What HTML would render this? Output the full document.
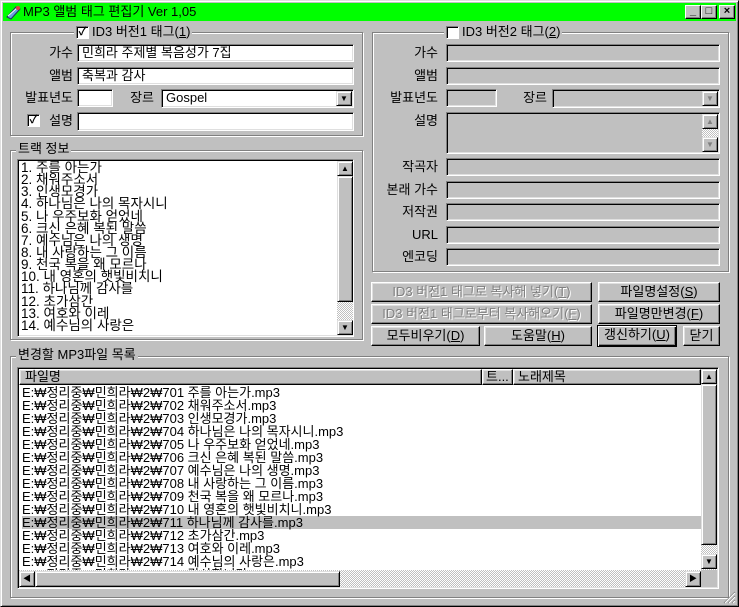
<!DOCTYPE html>
<html><head><meta charset="utf-8"><style>
*{margin:0;padding:0;box-sizing:border-box}
body{width:739px;height:607px;background:#c0c0c0;font-family:"Liberation Sans","Noto Sans CJK KR",sans-serif;font-size:13px;color:#000;position:relative;overflow:hidden}
.a{position:absolute}
.win{left:0;top:0;width:739px;height:607px;border:1px solid;border-color:#dfdfdf #000 #000 #dfdfdf;box-shadow:inset 1px 1px #fff,inset -1px -1px #808080}
.title{left:3px;top:3px;width:733px;height:18px;background:#00ff00;font-size:13px;line-height:18px;padding-left:20px}
.tb{top:5px;width:16px;height:14px;background:#c0c0c0;border:1px solid;border-color:#fff #000 #000 #fff;box-shadow:inset -1px -1px #808080;font-size:11px;font-weight:bold;text-align:center;line-height:11px}
.grp{border:1px solid #808080;box-shadow:inset 1px 1px #fff,1px 1px #fff}
.gt{background:#c0c0c0;padding:0 2px;line-height:14px;white-space:nowrap}
.sunk{border:1px solid;border-color:#808080 #fff #fff #808080;box-shadow:inset 1px 1px #000,inset -1px -1px #dfdfdf;background:#fff;line-height:15px;padding-left:4px;white-space:nowrap}
.dis{background:#c0c0c0}
.lbl{text-align:right;line-height:17px;white-space:nowrap}
.btn{background:#c0c0c0;border:1px solid;border-color:#fff #000 #000 #fff;box-shadow:inset -1px -1px #808080,inset 1px 1px #dfdfdf;text-align:center;line-height:17px;white-space:nowrap}
.btn.g{color:#808080;text-shadow:1px 1px #fff}
.cb{width:13px;height:13px;background:#fff;border:1px solid;border-color:#808080 #fff #fff #808080;box-shadow:inset 1px 1px #000;font-size:11px;line-height:11px;text-align:center;font-weight:bold}
.sb{width:16px;height:15px;background:#c0c0c0;border:1px solid;border-color:#dfdfdf #000 #000 #dfdfdf;box-shadow:inset 1px 1px #fff,inset -1px -1px #808080;font-size:8px;text-align:center;line-height:13px}
.dith{background:repeating-conic-gradient(#fff 0 25%,#c0c0c0 0 50%) 0 0/2px 2px}
.th{background:#c0c0c0;border:1px solid;border-color:#dfdfdf #000 #000 #dfdfdf;box-shadow:inset 1px 1px #fff,inset -1px -1px #808080}
.trk div{height:12.15px;line-height:12px;font-size:13.5px;white-space:nowrap}
.fl div{height:13px;line-height:13px;font-size:13px;white-space:nowrap;padding-left:3px}
</style></head><body>
<div class="a win"></div>
<div class="a title">MP3 앨범 태그 편집기 Ver 1,05</div>
<svg class="a" style="left:5px;top:4px" width="17" height="16"><path d="M2 13 L11 3 L15 5 L6 15 Z" fill="#6aa0e0" stroke="#203060"/><path d="M3 12 L12 4" stroke="#fff"/><circle cx="13" cy="4" r="2" fill="#e04040"/></svg>
<div class="a tb" style="left:685px">_</div>
<div class="a tb" style="left:701px">□</div>
<div class="a tb" style="left:719px">×</div>

<!-- ID3 v1 -->
<div class="a grp" style="left:10px;top:32px;width:353px;height:104px"></div>
<div class="a gt" style="left:74px;top:25px;padding-left:18px">ID3 버전1 태그(<u>1</u>)</div>
<div class="a cb" style="left:76px;top:26px">✓</div>
<div class="a lbl" style="left:20px;top:44px;width:53px">가수</div>
<div class="a sunk" style="left:77px;top:44px;width:277px;height:18px">민희라 주제별 복음성가 7집</div>
<div class="a lbl" style="left:20px;top:67px;width:53px">앨범</div>
<div class="a sunk" style="left:77px;top:67px;width:277px;height:18px">축복과 감사</div>
<div class="a lbl" style="left:12px;top:89px;width:61px">발표년도</div>
<div class="a sunk" style="left:77px;top:89px;width:36px;height:18px"></div>
<div class="a lbl" style="left:122px;top:89px;width:32px">장르</div>
<div class="a sunk" style="left:161px;top:89px;width:193px;height:19px">Gospel</div>
<div class="a sb" style="left:336px;top:91px">▼</div>
<div class="a cb" style="left:27px;top:114px">✓</div>
<div class="a lbl" style="left:40px;top:112px;width:33px">설명</div>
<div class="a sunk" style="left:77px;top:112px;width:277px;height:19px"></div>

<!-- Track -->
<div class="a grp" style="left:10px;top:150px;width:353px;height:190px"></div>
<div class="a gt" style="left:16px;top:142px">트랙 정보</div>
<div class="a sunk trk" style="left:17px;top:159px;width:337px;height:178px;padding:2px 0 0 3px">
<div>1. 주를 아는가</div><div>2. 채워주소서</div><div>3. 인생모경가</div><div>4. 하나님은 나의 목자시니</div><div>5. 나 우주보화 얻었네</div><div>6. 크신 은혜 복된 말씀</div><div>7. 예수님은 나의 생명</div><div>8. 내 사랑하는 그 이름</div><div>9. 천국 복을 왜 모르나</div><div>10. 내 영혼의 햇빛비치니</div><div>11. 하나님께 감사를</div><div>12. 초가삼간</div><div>13. 여호와 이레</div><div>14. 예수님의 사랑은</div></div>
<div class="a dith" style="left:337px;top:161px;width:16px;height:174px"></div>
<div class="a sb" style="left:337px;top:161px">▲</div>
<div class="a th" style="left:337px;top:176px;width:16px;height:126px"></div>
<div class="a sb" style="left:337px;top:320px">▼</div>

<!-- ID3 v2 -->
<div class="a grp" style="left:372px;top:32px;width:357px;height:240px"></div>
<div class="a gt" style="left:444px;top:25px;padding-left:18px">ID3 버전2 태그(<u>2</u>)</div>
<div class="a cb" style="left:446px;top:26px"></div>
<div class="a lbl" style="left:375px;top:44px;width:63px">가수</div>
<div class="a sunk dis" style="left:446px;top:44px;width:274px;height:18px"></div>
<div class="a lbl" style="left:375px;top:67px;width:63px">앨범</div>
<div class="a sunk dis" style="left:446px;top:67px;width:274px;height:18px"></div>
<div class="a lbl" style="left:375px;top:89px;width:63px">발표년도</div>
<div class="a sunk dis" style="left:446px;top:89px;width:51px;height:18px"></div>
<div class="a lbl" style="left:512px;top:89px;width:35px">장르</div>
<div class="a sunk dis" style="left:552px;top:89px;width:168px;height:19px"></div>
<div class="a sb" style="left:702px;top:91px;color:#808080">▼</div>
<div class="a lbl" style="left:375px;top:112px;width:63px">설명</div>
<div class="a sunk dis" style="left:446px;top:112px;width:274px;height:42px"></div>
<div class="a dith" style="left:702px;top:114px;width:16px;height:38px"></div>
<div class="a sb" style="left:702px;top:114px;color:#808080">▲</div>
<div class="a sb" style="left:702px;top:137px;color:#808080">▼</div>
<div class="a lbl" style="left:375px;top:158px;width:63px">작곡자</div>
<div class="a sunk dis" style="left:446px;top:158px;width:274px;height:18px"></div>
<div class="a lbl" style="left:375px;top:181px;width:63px">본래 가수</div>
<div class="a sunk dis" style="left:446px;top:181px;width:274px;height:18px"></div>
<div class="a lbl" style="left:375px;top:203px;width:63px">저작권</div>
<div class="a sunk dis" style="left:446px;top:203px;width:274px;height:18px"></div>
<div class="a lbl" style="left:375px;top:226px;width:63px">URL</div>
<div class="a sunk dis" style="left:446px;top:226px;width:274px;height:18px"></div>
<div class="a lbl" style="left:375px;top:248px;width:63px">엔코딩</div>
<div class="a sunk dis" style="left:446px;top:248px;width:274px;height:18px"></div>

<!-- buttons -->
<div class="a btn g" style="left:371px;top:282px;width:221px;height:20px">ID3 버전1 태그로 복사해 넣기(<u>T</u>)</div>
<div class="a btn" style="left:598px;top:282px;width:122px;height:20px">파일명설정(<u>S</u>)</div>
<div class="a btn g" style="left:371px;top:304px;width:221px;height:20px">ID3 버전1 태그로부터 복사해오기(<u>F</u>)</div>
<div class="a btn" style="left:598px;top:304px;width:122px;height:20px">파일명만변경(<u>F</u>)</div>
<div class="a btn" style="left:371px;top:326px;width:109px;height:20px">모두비우기(<u>D</u>)</div>
<div class="a btn" style="left:484px;top:326px;width:108px;height:20px">도움말(<u>H</u>)</div>
<div class="a btn" style="left:597px;top:325px;width:80px;height:22px;border-color:#000;box-shadow:inset 1px 1px #fff,inset -1px -1px #000,inset -2px -2px #808080">갱신하기(<u>U</u>)</div>
<div class="a btn" style="left:683px;top:326px;width:37px;height:20px">닫기</div>

<!-- file list -->
<div class="a grp" style="left:10px;top:356px;width:719px;height:242px"></div>
<div class="a gt" style="left:16px;top:348px">변경할 MP3파일 목록</div>
<div class="a sunk" style="left:17px;top:367px;width:702px;height:222px;padding:0"></div>
<div class="a btn" style="left:19px;top:369px;width:463px;height:16px;text-align:left;padding-left:5px;line-height:14px">파일명</div>
<div class="a btn" style="left:482px;top:369px;width:31px;height:16px;text-align:left;padding-left:3px;line-height:14px">트...</div>
<div class="a btn" style="left:513px;top:369px;width:188px;height:16px;text-align:left;padding-left:4px;line-height:14px">노래제목</div>
<div class="a" style="left:22px;top:516px;width:679px;height:13px;background:#c0c0c0"></div>
<div class="a fl" style="left:19px;top:386px;width:682px;height:184px;overflow:hidden">
<div>E:₩정리중₩민희라₩2₩701 주를 아는가.mp3</div><div>E:₩정리중₩민희라₩2₩702 채워주소서.mp3</div><div>E:₩정리중₩민희라₩2₩703 인생모경가.mp3</div><div>E:₩정리중₩민희라₩2₩704 하나님은 나의 목자시니.mp3</div><div>E:₩정리중₩민희라₩2₩705 나 우주보화 얻었네.mp3</div><div>E:₩정리중₩민희라₩2₩706 크신 은혜 복된 말씀.mp3</div><div>E:₩정리중₩민희라₩2₩707 예수님은 나의 생명.mp3</div><div>E:₩정리중₩민희라₩2₩708 내 사랑하는 그 이름.mp3</div><div>E:₩정리중₩민희라₩2₩709 천국 복을 왜 모르나.mp3</div><div>E:₩정리중₩민희라₩2₩710 내 영혼의 햇빛비치니.mp3</div><div>E:₩정리중₩민희라₩2₩711 하나님께 감사를.mp3</div><div>E:₩정리중₩민희라₩2₩712 초가삼간.mp3</div><div>E:₩정리중₩민희라₩2₩713 여호와 이레.mp3</div><div>E:₩정리중₩민희라₩2₩714 예수님의 사랑은.mp3</div><div>E:₩정리중₩민희라₩2₩715 감사합니다.mp3</div></div>
<div class="a dith" style="left:701px;top:369px;width:16px;height:201px"></div>
<div class="a sb" style="left:701px;top:369px">▲</div>
<div class="a th" style="left:701px;top:384px;width:16px;height:161px"></div>
<div class="a sb" style="left:701px;top:554px">▼</div>
<div class="a dith" style="left:19px;top:570px;width:682px;height:17px"></div>
<div class="a sb" style="left:19px;top:571px;height:16px">◀</div>
<div class="a th" style="left:35px;top:571px;width:305px;height:16px"></div>
<div class="a sb" style="left:685px;top:571px;height:16px">▶</div>
<div class="a" style="left:701px;top:570px;width:16px;height:17px;background:#c0c0c0"></div>
<svg class="a" style="left:723px;top:591px" width="13" height="13"><path d="M12 1L1 12M12 5L5 12M12 9L9 12" stroke="#808080" stroke-width="1"/><path d="M12 2L2 12M12 6L6 12M12 10L10 12" stroke="#fff"/></svg>
</body></html>
